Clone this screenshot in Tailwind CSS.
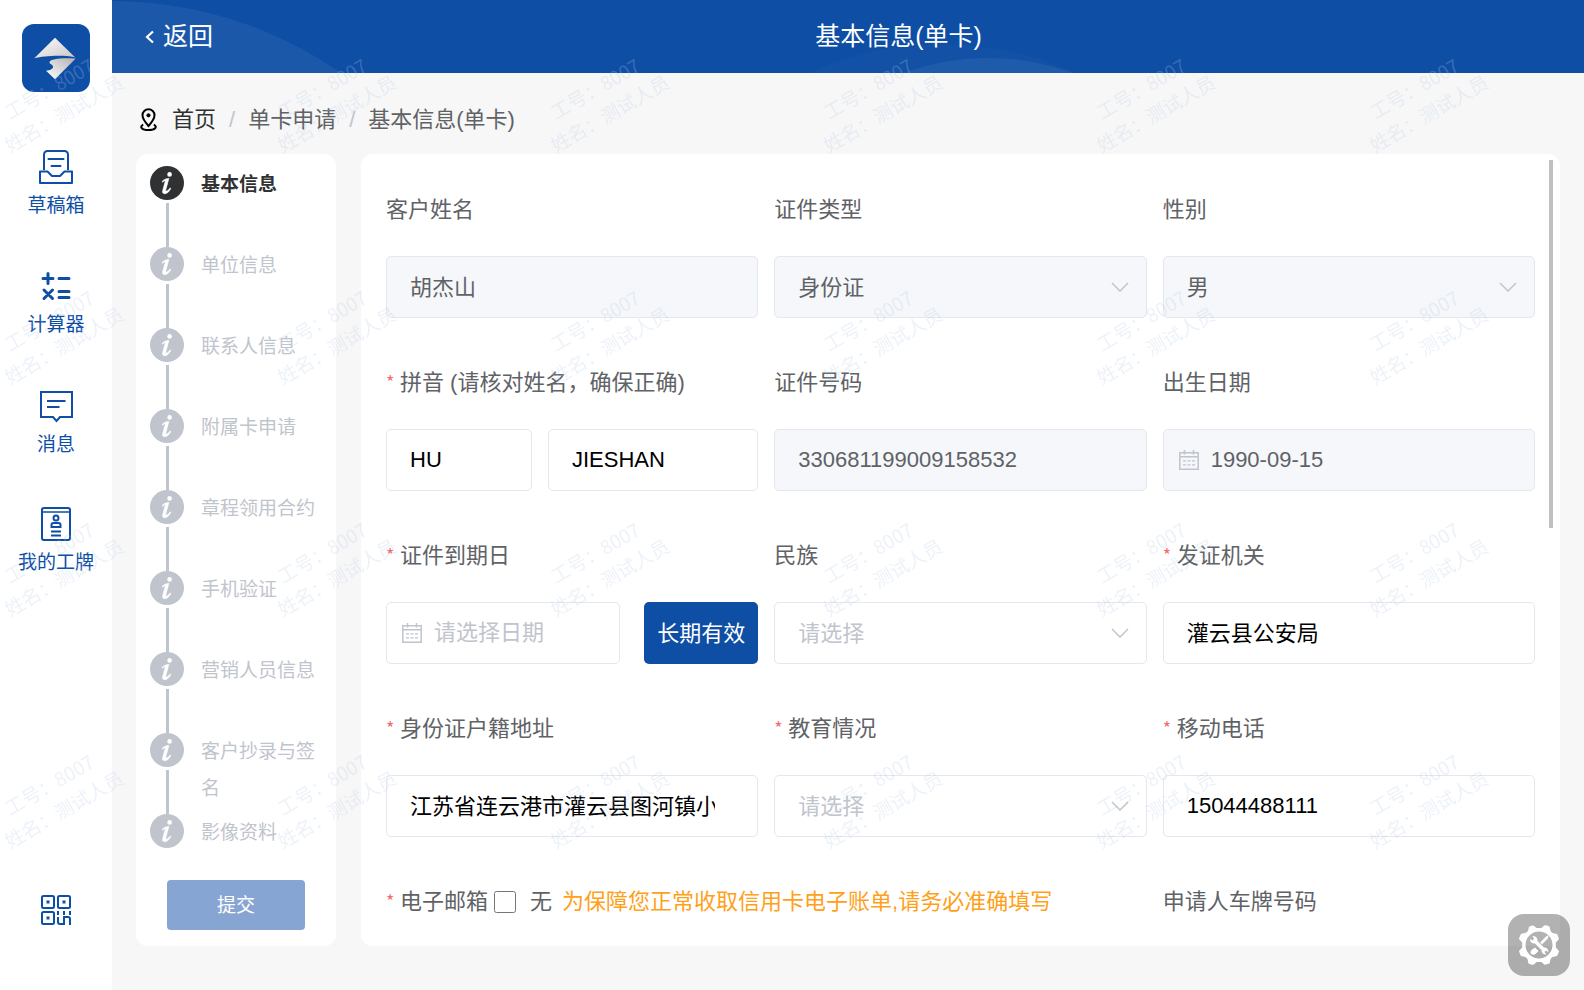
<!DOCTYPE html>
<html lang="zh-CN">
<head>
<meta charset="utf-8">
<meta name="viewport" content="width=device-width, initial-scale=1">
<title>基本信息(单卡)</title>
<script src="https://cdn.jsdelivr.net/npm/@tailwindcss/browser@4"></script>
</head>
<body class="flex h-screen overflow-hidden bg-[#f7f7f7] font-['Liberation_Sans','Noto_Sans_CJK_SC',sans-serif] text-[22px] text-[#606266]">

<!-- Shared icon shapes -->
<svg class="hidden" aria-hidden="true">
  <symbol id="info" viewBox="0 0 34 34">
    <circle cx="17" cy="17" r="17" fill="currentColor"/>
    <circle cx="19.6" cy="8.4" r="2.3" fill="#fff"/>
    <path fill="#fff" stroke="#fff" stroke-width=".6" d="M12 15.6C13.9 13.5 16.2 12.5 18.9 12.4L15.9 23.4c-.4 1.5.1 1.9 1 1.5 1.4-.6 2.4-1.8 3.1-3l.8.5C19.6 25 17.4 27.7 14.8 27.7c-1.9 0-2.7-1.2-2.1-3.3l2.3-8.3c.3-1.1 0-1.5-.8-1.2-.6.2-1 .7-1.5 1.3z"/>
  </symbol>
  <symbol id="chevron" viewBox="0 0 18 10">
    <path d="M1 1l8 8 8-8" fill="none" stroke="#c0c4cc" stroke-width="1.5"/>
  </symbol>
  <symbol id="calendar" viewBox="0 0 20 20">
    <path d="M.8 2.7h18.4v16.5H.8zM.8 6.7h18.4M5.5 0v4.6M14.5 0v4.6" fill="none" stroke="#c0c4cc" stroke-width="1.5"/>
    <path d="M4 10.8h3M8.5 10.8h3M13 10.8h3M4 14.8h3M8.5 14.8h3M13 14.8h3" stroke="#c0c4cc" stroke-width="1.3"/>
  </symbol>
</svg>

<aside class="flex w-[112px] shrink-0 flex-col items-center bg-white pt-6 text-[19px] text-[#0e4ea5]">
  <svg class="size-[68px]" viewBox="0 0 68 68" role="img" aria-label="标志">
    <defs>
      <linearGradient id="g1" x1="0" y1="0" x2="1" y2="1"><stop offset="0" stop-color="#fff"/><stop offset="1" stop-color="#c9c5c6"/></linearGradient>
      <linearGradient id="g2" x1="1" y1="0" x2="0" y2="1"><stop offset="0" stop-color="#b3afb0"/><stop offset="1" stop-color="#fff"/></linearGradient>
    </defs>
    <rect width="68" height="68" rx="12" fill="#0e4ea5"/>
    <path d="M33 13.7L12.3 34.3C22 31.8 40 30.5 53 33.3z" fill="url(#g1)"/>
    <path d="M53.7 34.5L33 55.3 24 46.7C27.500 46.500 31.500 45 31 42.500 30.500 40 27 40.500 27.600 37.800 28.500 34.800 40 33.600 53.700 34.500z" fill="url(#g2)"/>
  </svg>
  <nav class="flex flex-col items-center">
    <a href="#draft" class="mt-[58px] flex h-[68px] flex-col items-center justify-between leading-[24px]">
      <svg class="size-[34px]" viewBox="0 0 34 34" fill="none" stroke="currentColor" stroke-width="2" stroke-linejoin="round"><path d="M5 20V4.500A3.500 3.500 0 018.500 1h17A3.500 3.500 0 0129 4.500V20"/><path d="M1 21.500h7.500L13 26h8l4.500-4.500H33V33H1z"/><path d="M9.500 9h15M12.500 16h9" stroke-linecap="round"/></svg>
      草稿箱
    </a>
    <a href="#calc" class="mt-[51px] flex h-[68px] flex-col items-center justify-between leading-[24px]">
      <svg class="size-[34px]" viewBox="0 0 34 34" fill="none" stroke="currentColor" stroke-width="3" stroke-linecap="round"><path d="M4 9.500h10M9 4.500v10M20 9.500h10M5 21l8.500 8.500M13.500 21L5 29.500M20 22.500h10M20 28.500h10"/></svg>
      计算器
    </a>
    <a href="#msg" class="mt-[52px] flex h-[68px] flex-col items-center justify-between leading-[24px]">
      <svg class="size-[34px]" viewBox="0 0 34 34" fill="none" stroke="currentColor" stroke-width="2"><path d="M2 3h31v25h-12l-3.500 4-3.500-4H2z"/><path d="M8 12h18.500M8 18h12.500"/></svg>
      消息
    </a>
    <a href="#badge" class="mt-[50px] flex h-[68px] flex-col items-center justify-between leading-[24px]">
      <svg class="size-[34px]" viewBox="0 0 34 34" fill="none" stroke="currentColor" stroke-width="2"><rect x="3" y="1" width="28" height="32" rx="2"/><path d="M3 5h28" stroke-width="1.500"/><circle cx="17" cy="11" r="2.500"/><path d="M12.500 20v-2q0-2 2-2h5q2 0 2 2v2zM12 24.500h10M12 28.500h10"/></svg>
      我的工牌
    </a>
  </nav>
  <button type="button" aria-label="二维码" class="mt-auto mb-[64px]">
    <svg class="size-8" viewBox="0 0 32 32" fill="none" stroke="currentColor" stroke-width="2"><rect x="2" y="2" width="12" height="12" rx="1.500"/><rect x="18" y="2" width="12" height="12" rx="1.500"/><rect x="2" y="18" width="12" height="12" rx="1.500"/><path d="M6.500 8h3M22.500 8h3M6.500 24h3" stroke-width="3"/><path d="M18 17v4M24 17v4M30 17v4M18 23v5q0 2 2 2h4v-7h4q2 0 2 2v6"/></svg>
  </button>
</aside>

<div class="flex min-w-0 flex-1 flex-col">
  <header class="relative flex h-[73px] shrink-0 items-center overflow-hidden bg-[#0e4ea5] text-[25px] text-white">
    <svg class="absolute inset-0 size-full" aria-hidden="true">
      <circle cx="0" cy="401" r="400" fill="#fff" fill-opacity=".06"/>
      <circle cx="830" cy="366" r="322" fill="#fff" fill-opacity=".02"/>
      <circle cx="876" cy="306" r="248" fill="#fff" fill-opacity=".06"/>
    </svg>
    <button type="button" class="relative flex items-center gap-2 pl-[33px]">
      <svg class="h-[14px] w-[10px]" viewBox="0 0 10 14" fill="none" stroke="currentColor" stroke-width="2.200"><path d="M8 1.500L2 7l6 5.500"/></svg>返回
    </button>
    <h1 class="relative flex-1 text-center">基本信息(单卡)</h1>
  </header>

  <nav aria-label="面包屑" class="flex h-[81px] shrink-0 items-center gap-[13px] pt-3 pl-[28px]">
    <svg class="mr-0.5 h-[23px] w-[17px]" viewBox="0 0 17 23" fill="none" stroke="#000" stroke-width="2"><path d="M8.500 18C4.500 13.500 2.500 10.500 2.500 7.300a6 6 0 0112 0c0 3.200-2 6.200-6 10.700z"/><circle cx="8.500" cy="7.300" r="1.600" fill="#000" stroke-width="1"/><path d="M3.200 16.500C-1 19 2 22 8.500 22s9.500-3 5.300-5.500"/></svg>
    <a href="#home" class="text-[#303133]">首页</a><span class="text-[#c0c4cc]">/</span><a href="#apply">单卡申请</a><span class="text-[#c0c4cc]">/</span><span>基本信息(单卡)</span>
  </nav>

  <main class="mb-11 flex min-h-0 flex-1 gap-[25px] pr-6 pl-6">
    <section class="flex w-[200px] shrink-0 flex-col rounded-xl bg-white pt-3 pb-4 pl-[14px] text-[19px] leading-[37px] text-[#c0c4cc]">
      <ol>
        <li class="flex h-[81px] gap-[17px] font-bold text-[#303133]"><span class="flex w-[34px] shrink-0 flex-col items-center gap-[3px]"><svg class="size-[34px] shrink-0"><use href="#info"/></svg><span class="w-[3px] flex-1 bg-[#c0c4cc]"></span></span><span class="w-[120px]">基本信息</span></li>
        <li class="flex h-[81px] gap-[17px]"><span class="flex w-[34px] shrink-0 flex-col items-center gap-[3px]"><svg class="size-[34px] shrink-0"><use href="#info"/></svg><span class="w-[3px] flex-1 bg-[#c0c4cc]"></span></span><span class="w-[120px]">单位信息</span></li>
        <li class="flex h-[81px] gap-[17px]"><span class="flex w-[34px] shrink-0 flex-col items-center gap-[3px]"><svg class="size-[34px] shrink-0"><use href="#info"/></svg><span class="w-[3px] flex-1 bg-[#c0c4cc]"></span></span><span class="w-[120px]">联系人信息</span></li>
        <li class="flex h-[81px] gap-[17px]"><span class="flex w-[34px] shrink-0 flex-col items-center gap-[3px]"><svg class="size-[34px] shrink-0"><use href="#info"/></svg><span class="w-[3px] flex-1 bg-[#c0c4cc]"></span></span><span class="w-[120px]">附属卡申请</span></li>
        <li class="flex h-[81px] gap-[17px]"><span class="flex w-[34px] shrink-0 flex-col items-center gap-[3px]"><svg class="size-[34px] shrink-0"><use href="#info"/></svg><span class="w-[3px] flex-1 bg-[#c0c4cc]"></span></span><span class="w-[120px]">章程领用合约</span></li>
        <li class="flex h-[81px] gap-[17px]"><span class="flex w-[34px] shrink-0 flex-col items-center gap-[3px]"><svg class="size-[34px] shrink-0"><use href="#info"/></svg><span class="w-[3px] flex-1 bg-[#c0c4cc]"></span></span><span class="w-[120px]">手机验证</span></li>
        <li class="flex h-[81px] gap-[17px]"><span class="flex w-[34px] shrink-0 flex-col items-center gap-[3px]"><svg class="size-[34px] shrink-0"><use href="#info"/></svg><span class="w-[3px] flex-1 bg-[#c0c4cc]"></span></span><span class="w-[120px]">营销人员信息</span></li>
        <li class="flex h-[81px] gap-[17px]"><span class="flex w-[34px] shrink-0 flex-col items-center gap-[3px]"><svg class="size-[34px] shrink-0"><use href="#info"/></svg><span class="w-[3px] flex-1 bg-[#c0c4cc]"></span></span><span class="w-[120px]">客户抄录与签名</span></li>
        <li class="flex gap-[17px]"><svg class="size-[34px] shrink-0"><use href="#info"/></svg><span class="w-[120px]">影像资料</span></li>
      </ol>
      <button type="button" disabled class="mt-auto ml-[17px] h-[50px] w-[138px] rounded bg-[#87a5d2] text-white">提交</button>
    </section>

    <section class="flex min-w-0 flex-1 rounded-xl bg-white pt-[6px] pr-[7px] pl-[25px]">
      <form class="grid min-w-0 flex-1 auto-rows-[173px] grid-cols-3 gap-x-4 overflow-hidden pt-[19px]">
        <div class="flex flex-col gap-[15px]">
          <label for="name" class="leading-[62px]">客户姓名</label>
          <input id="name" disabled value="胡杰山" class="h-[62px] w-full rounded-[5px] border border-[#e4e7ed] bg-[#f5f7fa] px-[23px] pb-1">
        </div>
        <div class="flex flex-col gap-[15px]">
          <label for="idtype" class="leading-[62px]">证件类型</label>
          <div class="relative">
            <select id="idtype" disabled class="h-[62px] w-full appearance-none rounded-[5px] border border-[#e4e7ed] bg-[#f5f7fa] px-[23px] opacity-100"><option>身份证</option></select>
            <svg class="pointer-events-none absolute top-[26px] right-[18px] h-[10px] w-[18px]"><use href="#chevron"/></svg>
          </div>
        </div>
        <div class="flex flex-col gap-[15px]">
          <label for="sex" class="leading-[62px]">性别</label>
          <div class="relative">
            <select id="sex" disabled class="h-[62px] w-full appearance-none rounded-[5px] border border-[#e4e7ed] bg-[#f5f7fa] px-[23px] opacity-100"><option>男</option></select>
            <svg class="pointer-events-none absolute top-[26px] right-[18px] h-[10px] w-[18px]"><use href="#chevron"/></svg>
          </div>
        </div>

        <div class="flex flex-col gap-[15px]">
          <label for="py1" class="flex leading-[62px]"><span class="w-[14px] font-['Noto_Sans_CJK_SC',sans-serif] text-[18px] leading-[58px] text-[#f56c6c]">*</span>拼音 (请核对姓名，确保正确)</label>
          <div class="flex gap-4">
            <input id="py1" value="HU" class="h-[62px] w-[146px] rounded-[5px] border border-[#e4e7ed] px-[23px] text-black">
            <input aria-label="拼音名" value="JIESHAN" class="h-[62px] min-w-0 flex-1 rounded-[5px] border border-[#e4e7ed] px-[23px] text-black">
          </div>
        </div>
        <div class="flex flex-col gap-[15px]">
          <label for="idno" class="leading-[62px]">证件号码</label>
          <input id="idno" disabled value="330681199009158532" class="h-[62px] w-full rounded-[5px] border border-[#e4e7ed] bg-[#f5f7fa] px-[23px]">
        </div>
        <div class="flex flex-col gap-[15px]">
          <label for="birth" class="leading-[62px]">出生日期</label>
          <div class="relative">
            <input id="birth" disabled value="1990-09-15" class="h-[62px] w-full rounded-[5px] border border-[#e4e7ed] bg-[#f5f7fa] pr-4 pl-[47px]">
            <svg class="pointer-events-none absolute top-[21px] left-4 size-5"><use href="#calendar"/></svg>
          </div>
        </div>

        <div class="flex flex-col gap-[15px]">
          <label for="expire" class="flex leading-[62px]"><span class="w-[14px] font-['Noto_Sans_CJK_SC',sans-serif] text-[18px] leading-[58px] text-[#f56c6c]">*</span>证件到期日</label>
          <div class="flex gap-6">
            <div class="relative min-w-0 flex-1">
              <input id="expire" placeholder="请选择日期" class="h-[62px] w-full rounded-[5px] border border-[#e4e7ed] pr-4 pl-[47px] text-black placeholder:text-[#c0c4cc]">
              <svg class="pointer-events-none absolute top-[21px] left-4 size-5"><use href="#calendar"/></svg>
            </div>
            <button type="button" class="h-[62px] w-[114px] shrink-0 rounded-[5px] bg-[#0e4ea5] text-white">长期有效</button>
          </div>
        </div>
        <div class="flex flex-col gap-[15px]">
          <label for="nation" class="leading-[62px]">民族</label>
          <div class="relative">
            <select id="nation" class="h-[62px] w-full appearance-none rounded-[5px] border border-[#e4e7ed] bg-white px-[23px] text-[#c0c4cc]"><option>请选择</option></select>
            <svg class="pointer-events-none absolute top-[26px] right-[18px] h-[10px] w-[18px]"><use href="#chevron"/></svg>
          </div>
        </div>
        <div class="flex flex-col gap-[15px]">
          <label for="issuer" class="flex leading-[62px]"><span class="w-[14px] font-['Noto_Sans_CJK_SC',sans-serif] text-[18px] leading-[58px] text-[#f56c6c]">*</span>发证机关</label>
          <input id="issuer" value="灌云县公安局" class="h-[62px] w-full rounded-[5px] border border-[#e4e7ed] px-[23px] pb-1 text-black">
        </div>

        <div class="flex flex-col gap-[15px]">
          <label for="addr" class="flex leading-[62px]"><span class="w-[14px] font-['Noto_Sans_CJK_SC',sans-serif] text-[18px] leading-[58px] text-[#f56c6c]">*</span>身份证户籍地址</label>
          <input id="addr" value="江苏省连云港市灌云县图河镇小" class="h-[62px] w-full rounded-[5px] border border-[#e4e7ed] pr-[42px] pb-1 pl-[23px] text-black">
        </div>
        <div class="flex flex-col gap-[15px]">
          <label for="edu" class="flex leading-[62px]"><span class="w-[14px] font-['Noto_Sans_CJK_SC',sans-serif] text-[18px] leading-[58px] text-[#f56c6c]">*</span>教育情况</label>
          <div class="relative">
            <select id="edu" class="h-[62px] w-full appearance-none rounded-[5px] border border-[#e4e7ed] bg-white px-[23px] text-[#c0c4cc]"><option>请选择</option></select>
            <svg class="pointer-events-none absolute top-[26px] right-[18px] h-[10px] w-[18px]"><use href="#chevron"/></svg>
          </div>
        </div>
        <div class="flex flex-col gap-[15px]">
          <label for="phone" class="flex leading-[62px]"><span class="w-[14px] font-['Noto_Sans_CJK_SC',sans-serif] text-[18px] leading-[58px] text-[#f56c6c]">*</span>移动电话</label>
          <input id="phone" value="15044488111" class="h-[62px] w-full rounded-[5px] border border-[#e4e7ed] px-[23px] text-black">
        </div>

        <div class="col-span-2 flex h-[62px] items-center whitespace-nowrap leading-[62px]">
          <span class="flex"><span class="w-[14px] font-['Noto_Sans_CJK_SC',sans-serif] text-[18px] leading-[58px] text-[#f56c6c]">*</span>电子邮箱</span>
          <input id="noemail" type="checkbox" class="ml-1.5 size-[22px]">
          <label for="noemail" class="ml-[14px]">无</label>
          <span class="ml-[10px] text-[#ff9f1a]">为保障您正常收取信用卡电子账单,请务必准确填写</span>
        </div>
        <span class="leading-[62px]">申请人车牌号码</span>
      </form>
      <div class="ml-[14px] h-[368px] w-1 bg-[#c0c0c0]"></div>
    </section>
  </main>
</div>

<!-- Operator watermark tiled over the whole window -->
<svg class="pointer-events-none fixed inset-0 size-full" aria-hidden="true">
  <defs>
    <pattern id="wm" width="273" height="232" patternUnits="userSpaceOnUse">
      <g fill="#b4c8e6" fill-opacity=".24" class="font-['Noto_Sans_CJK_SC',sans-serif] text-[19px]">
        <text transform="translate(10 120) rotate(-30)">工号：8007</text>
        <text transform="translate(10 153) rotate(-30)">姓名：测试人员</text>
      </g>
    </pattern>
  </defs>
  <rect width="100%" height="928" fill="url(#wm)"/>
</svg>

<button type="button" aria-label="设置" class="fixed right-[14px] bottom-[14px] flex size-[62px] items-center justify-center rounded-2xl bg-black/30">
  <svg class="size-[42px]" viewBox="-21 -21 42 42">
    <path fill="#fff" fill-rule="evenodd" d="M-5.500-19.500Q-6-20-10-18.300L-11-14Q-13-11.800-15.300-11.800L-18-11Q-20-7-20-6L-16.800-2.500V2.500L-20 6Q-19 10-18 11L-13.500 12-11.500 14-10.500 18.500Q-7 20-5.500 19.700L-2.500 17H2.500L5.500 19.700Q9 19 10.500 18.500L11.500 14 13.500 12 18 11Q20 7 20 6L16.800 2.500V-2.500L20-6Q19-9 18-11L13.500-12 11.500-14 10.500-18.500Q7-20 5.500-19.700L2.500-17H-2.500zM0-13.500a13.500 13.500 0 100 27 13.500 13.500 0 100-27z"/>
    <path fill="#fff" d="M8.500-9.500L9.500-8.500 8.500-6 3-.8 1.200-2.600 6.500-8zM-4 2.500l3.500 3.500-3 3q-2 1.500-4 0t0-4z"/>
    <path fill="#fff" d="M-9-6L-6.500-4.500-5-6-6.500-9Q-3-9.500-1.800-6.500L-1.500-4 5 2.500Q9 2 9.500 7.500L7 5.500 5.500 7 7.500 9.500Q2.500 9.500 2.500 5L-4-1.500Q-9-1.500-9-6z"/>
  </svg>
</button>
</body>
</html>
